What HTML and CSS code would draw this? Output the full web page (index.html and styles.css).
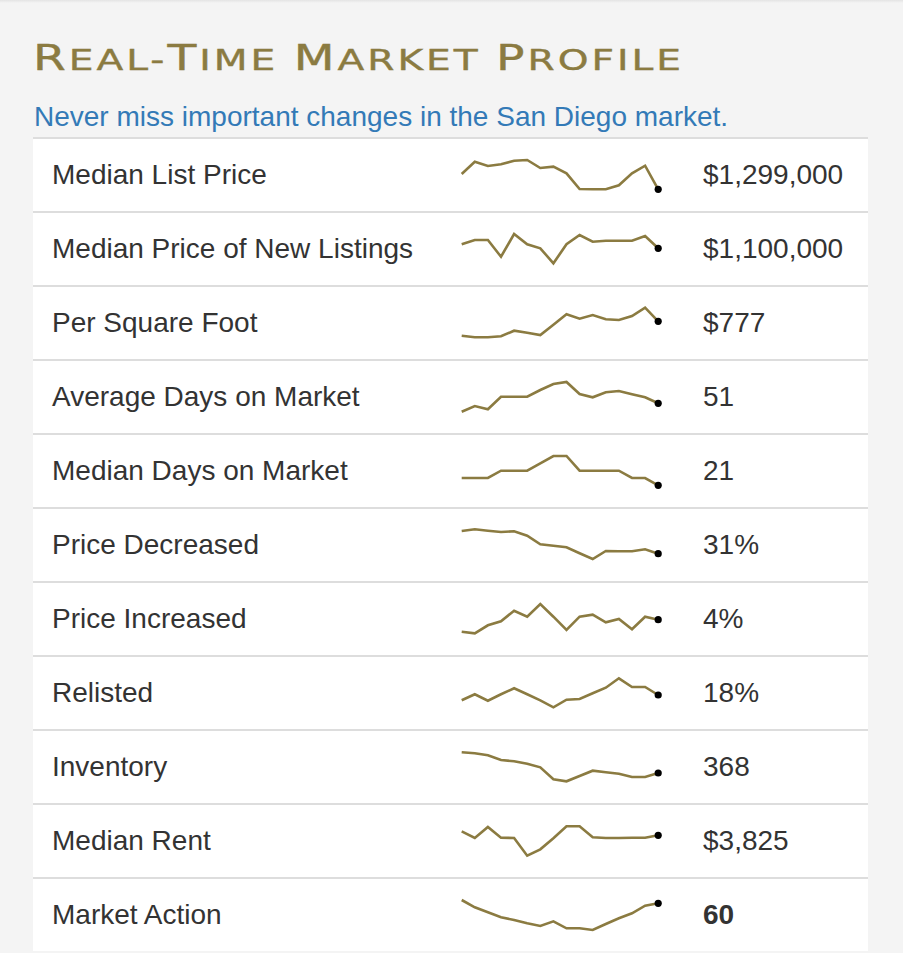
FILE: index.html
```html
<!DOCTYPE html>
<html>
<head>
<meta charset="utf-8">
<link rel="stylesheet" href="styles.css">
</head>
<body>
<div class="topshade"></div>
<main class="page">
  <h1 class="title"><span class="title-text"><span class="cap">R</span>eal-<span class="cap">T</span>ime <span class="cap">M</span>arket <span class="cap">P</span>rofile</span></h1>
  <p class="subtitle">Never miss important changes in the San Diego market.</p>
  <div class="card">
    <div class="row">
      <div class="label">Median List Price</div>
      <svg class="spark" viewBox="0 0 210 72" width="210" height="72"><polyline points="6.7,35 19.8,22.7 32.9,27 46,25.3 59.1,21.7 72.2,21 85.3,29 98.4,27.7 111.5,34.3 124.6,50 137.7,50.3 150.8,50.3 163.9,46.3 177,34.3 190.1,26.7 203.2,50.3"/><circle cx="203.2" cy="50.3" r="3.6"/></svg>
      <div class="value">$1,299,000</div>
    </div>
    <div class="row">
      <div class="label">Median Price of New Listings</div>
      <svg class="spark" viewBox="0 0 210 72" width="210" height="72"><polyline points="6.7,31.3 19.8,27 32.9,27 46,43.7 59.1,21 72.2,31.3 85.3,35.3 98.4,50.3 111.5,31.3 124.6,22 137.7,28.7 150.8,27.7 163.9,27.7 177,27.7 190.1,23 203.2,35.3"/><circle cx="203.2" cy="35.3" r="3.6"/></svg>
      <div class="value">$1,100,000</div>
    </div>
    <div class="row">
      <div class="label">Per Square Foot</div>
      <svg class="spark" viewBox="0 0 210 72" width="210" height="72"><polyline points="6.7,48.7 19.8,50.3 32.9,50.3 46,49.3 59.1,43.7 72.2,45.7 85.3,48 98.4,37.7 111.5,27.3 124.6,31.7 137.7,28 150.8,32.3 163.9,33 177,29 190.1,20.7 203.2,34.3"/><circle cx="203.2" cy="34.3" r="3.6"/></svg>
      <div class="value">$777</div>
    </div>
    <div class="row">
      <div class="label">Average Days on Market</div>
      <svg class="spark" viewBox="0 0 210 72" width="210" height="72"><polyline points="6.7,50.7 19.8,45 32.9,48.3 46,35.7 59.1,35.7 72.2,35.7 85.3,29 98.4,23 111.5,21 124.6,33 137.7,36.3 150.8,31.3 163.9,30 177,33.3 190.1,36.3 203.2,42.3"/><circle cx="203.2" cy="42.3" r="3.6"/></svg>
      <div class="value">51</div>
    </div>
    <div class="row">
      <div class="label">Median Days on Market</div>
      <svg class="spark" viewBox="0 0 210 72" width="210" height="72"><polyline points="6.7,43 19.8,43 32.9,43 46,35.7 59.1,35.7 72.2,35.7 85.3,28.3 98.4,21 111.5,21 124.6,35.7 137.7,35.7 150.8,35.7 163.9,35.7 177,43 190.1,43 203.2,50.3"/><circle cx="203.2" cy="50.3" r="3.6"/></svg>
      <div class="value">21</div>
    </div>
    <div class="row">
      <div class="label">Price Decreased</div>
      <svg class="spark" viewBox="0 0 210 72" width="210" height="72"><polyline points="6.7,22 19.8,20.3 32.9,21.7 46,23 59.1,22.3 72.2,26.7 85.3,35.3 98.4,36.7 111.5,38.3 124.6,44.3 137.7,50 150.8,42 163.9,42.3 177,42.3 190.1,40.3 203.2,44.7"/><circle cx="203.2" cy="44.7" r="3.6"/></svg>
      <div class="value">31%</div>
    </div>
    <div class="row">
      <div class="label">Price Increased</div>
      <svg class="spark" viewBox="0 0 210 72" width="210" height="72"><polyline points="6.7,48.7 19.8,50.3 32.9,42.3 46,38.3 59.1,27.7 72.2,33.7 85.3,21 98.4,33.7 111.5,47 124.6,33.7 137.7,31.7 150.8,39.3 163.9,36 177,46.3 190.1,33.7 203.2,36.7"/><circle cx="203.2" cy="36.7" r="3.6"/></svg>
      <div class="value">4%</div>
    </div>
    <div class="row">
      <div class="label">Relisted</div>
      <svg class="spark" viewBox="0 0 210 72" width="210" height="72"><polyline points="6.7,43.3 19.8,37.3 32.9,43.7 46,37.3 59.1,31.3 72.2,37.3 85.3,43.3 98.4,50.3 111.5,42.7 124.6,42 137.7,36.3 150.8,30.7 163.9,21.3 177,30 190.1,30 203.2,38"/><circle cx="203.2" cy="38" r="3.6"/></svg>
      <div class="value">18%</div>
    </div>
    <div class="row">
      <div class="label">Inventory</div>
      <svg class="spark" viewBox="0 0 210 72" width="210" height="72"><polyline points="6.7,21.3 19.8,22.3 32.9,24.3 46,29 59.1,30.3 72.2,32.7 85.3,36.3 98.4,48.3 111.5,50.3 124.6,45 137.7,39.7 150.8,41.3 163.9,42.7 177,46 190.1,46 203.2,42"/><circle cx="203.2" cy="42" r="3.6"/></svg>
      <div class="value">368</div>
    </div>
    <div class="row">
      <div class="label">Median Rent</div>
      <svg class="spark" viewBox="0 0 210 72" width="210" height="72"><polyline points="6.7,26.3 19.8,33 32.9,22 46,32.7 59.1,33 72.2,50.7 85.3,44.3 98.4,33.3 111.5,21.3 124.6,21.3 137.7,32.3 150.8,33 163.9,33 177,32.7 190.1,32.7 203.2,30.3"/><circle cx="203.2" cy="30.3" r="3.6"/></svg>
      <div class="value">$3,825</div>
    </div>
    <div class="row">
      <div class="label">Market Action</div>
      <svg class="spark" viewBox="0 0 210 72" width="210" height="72"><polyline points="6.7,21 19.8,28.3 32.9,33.3 46,38.3 59.1,41 72.2,44.3 85.3,47 98.4,42.3 111.5,49.3 124.6,49.3 137.7,51 150.8,45 163.9,39.3 177,34.3 190.1,26.7 203.2,24.3"/><circle cx="203.2" cy="24.3" r="3.6"/></svg>
      <div class="value strong">60</div>
    </div>
  </div>
</main>
</body>
</html>
```
FILE: styles.css
```css
html, body {
  margin: 0;
  padding: 0;
  background: #f4f4f4;
}
body {
  font-family: "Liberation Sans", Arial, sans-serif;
  color: #333;
  height: 953px;
  overflow: hidden;
}
.topshade {
  height: 3px;
  background: linear-gradient(#e4e4e4, #f4f4f4);
}
.page {
  padding-left: 33px;
  width: 835px;
}
.title {
  margin: 0;
  padding-top: 32px;
  height: 46px;
  font-family: "DejaVu Sans", "Liberation Sans", sans-serif;
  text-transform: uppercase;
  font-weight: 400;
  font-size: 29px;
  line-height: 46px;
  letter-spacing: 2.2px;
  color: #8b7b41;
  white-space: nowrap;
}
.title-text {
  display: inline-block;
  transform: scaleX(1.35);
  transform-origin: left center;
  -webkit-text-stroke: 0.4px #8b7b41;
}
.title .cap {
  font-size: 35px;
}
.subtitle {
  margin: 20px 0 0 1px;
  font-size: 28px;
  line-height: 32px;
  color: #337ab7;
  white-space: nowrap;
}
.card {
  margin-top: 4px;
  background: #fff;
  border-radius: 4px 4px 0 0;
}
.row {
  display: grid;
  grid-template-columns: 403px 210px 1fr;
  align-items: center;
  height: 72px;
  border-top: 2px solid #dddddd;
  padding-left: 19px;
}
.label, .value {
  font-size: 28px;
  color: #333;
  white-space: nowrap;
}
.value {
  padding-left: 38px;
}
.strong {
  font-weight: 700;
}
.spark {
  display: block;
}
.spark polyline {
  fill: none;
  stroke: #8b7b41;
  stroke-width: 2.6;
  stroke-linejoin: miter;
}
.spark circle {
  fill: #000;
}
```
